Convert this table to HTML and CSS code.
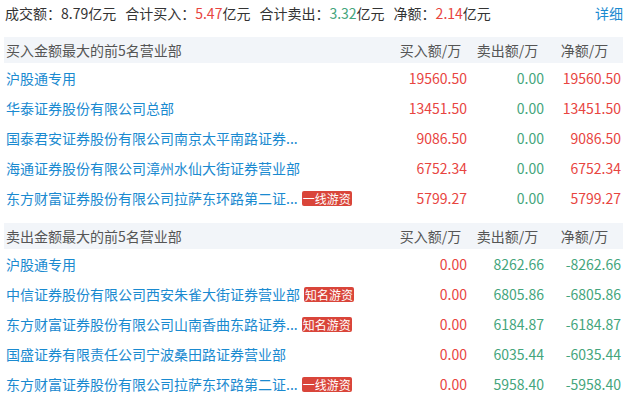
FILE: index.html
```html
<!DOCTYPE html>
<html lang="zh-CN">
<head>
<meta charset="utf-8">
<link rel="stylesheet" href="styles.css">
</head>
<body>
<div class="page">
  <div class="summary">
    <div class="stats">
      <span class="stat">成交额：8.79亿元</span>
      <span class="stat">合计买入：<span class="up">5.47</span>亿元</span>
      <span class="stat">合计卖出：<span class="down">3.32</span>亿元</span>
      <span class="stat">净额：<span class="up">2.14</span>亿元</span>
    </div>
    <a class="detail">详细</a>
  </div>

  <div class="table">
    <div class="row head">
      <div class="name">买入金额最大的前5名营业部</div>
      <div class="num">买入额/万</div>
      <div class="num">卖出额/万</div>
      <div class="num">净额/万</div>
    </div>
    <div class="row">
      <div class="name"><a>沪股通专用</a></div>
      <div class="num up">19560.50</div>
      <div class="num down">0.00</div>
      <div class="num up">19560.50</div>
    </div>
    <div class="row">
      <div class="name"><a>华泰证券股份有限公司总部</a></div>
      <div class="num up">13451.50</div>
      <div class="num down">0.00</div>
      <div class="num up">13451.50</div>
    </div>
    <div class="row">
      <div class="name"><a>国泰君安证券股份有限公司南京太平南路证券...</a></div>
      <div class="num up">9086.50</div>
      <div class="num down">0.00</div>
      <div class="num up">9086.50</div>
    </div>
    <div class="row">
      <div class="name"><a>海通证券股份有限公司漳州水仙大街证券营业部</a></div>
      <div class="num up">6752.34</div>
      <div class="num down">0.00</div>
      <div class="num up">6752.34</div>
    </div>
    <div class="row">
      <div class="name"><a>东方财富证券股份有限公司拉萨东环路第二证...</a><span class="tag">一线游资</span></div>
      <div class="num up">5799.27</div>
      <div class="num down">0.00</div>
      <div class="num up">5799.27</div>
    </div>
  </div>

  <div class="table second">
    <div class="row head">
      <div class="name">卖出金额最大的前5名营业部</div>
      <div class="num">买入额/万</div>
      <div class="num">卖出额/万</div>
      <div class="num">净额/万</div>
    </div>
    <div class="row">
      <div class="name"><a>沪股通专用</a></div>
      <div class="num up">0.00</div>
      <div class="num down">8262.66</div>
      <div class="num down">-8262.66</div>
    </div>
    <div class="row">
      <div class="name"><a>中信证券股份有限公司西安朱雀大街证券营业部</a><span class="tag">知名游资</span></div>
      <div class="num up">0.00</div>
      <div class="num down">6805.86</div>
      <div class="num down">-6805.86</div>
    </div>
    <div class="row">
      <div class="name"><a>东方财富证券股份有限公司山南香曲东路证券...</a><span class="tag">知名游资</span></div>
      <div class="num up">0.00</div>
      <div class="num down">6184.87</div>
      <div class="num down">-6184.87</div>
    </div>
    <div class="row">
      <div class="name"><a>国盛证券有限责任公司宁波桑田路证券营业部</a></div>
      <div class="num up">0.00</div>
      <div class="num down">6035.44</div>
      <div class="num down">-6035.44</div>
    </div>
    <div class="row">
      <div class="name"><a>东方财富证券股份有限公司拉萨东环路第二证...</a><span class="tag">一线游资</span></div>
      <div class="num up">0.00</div>
      <div class="num down">5958.40</div>
      <div class="num down">-5958.40</div>
    </div>
  </div>
</div>
</body>
</html>
```

FILE: styles.css
```css
* { box-sizing: border-box; }
html, body { margin: 0; padding: 0; background: #ffffff; }
body {
  font-family: "Noto Sans CJK SC", "Noto Sans", sans-serif;
  font-size: 14px;
  color: #333333;
}
.page { padding: 0 6px 0 4px; }
.summary {
  display: flex;
  justify-content: space-between;
  align-items: center;
  height: 26px;
  margin-bottom: 11px;
}
.stats { display: flex; gap: 9px; padding-left: 1px; }
.detail { color: #1a8ad0; cursor: pointer; }
.up { color: #e8453f; }
.down { color: #44a57c; }

.table { display: flex; flex-direction: column; }
.table.second { margin-top: 10px; }
.row {
  display: grid;
  grid-template-columns: 388px 77px 77px 77px;
  height: 30px;
  align-items: center;
}
.row.head {
  height: 26px;
  background: #f2f5f9;
  color: #555555;
}
.row.head .num { text-align: center; padding-right: 0; }
.name {
  padding-left: 2px;
  white-space: nowrap;
  display: flex;
  align-items: center;
}
.name a { color: #1a8ad0; cursor: pointer; }
.num { text-align: right; padding-right: 2px; }
.tag {
  display: inline-block;
  margin-left: 4px;
  height: 15px;
  line-height: 15px;
  padding: 0 1px;
  font-size: 12px;
  color: #ffffff;
  background: #d9453a;
  border-radius: 2px;
}
```
